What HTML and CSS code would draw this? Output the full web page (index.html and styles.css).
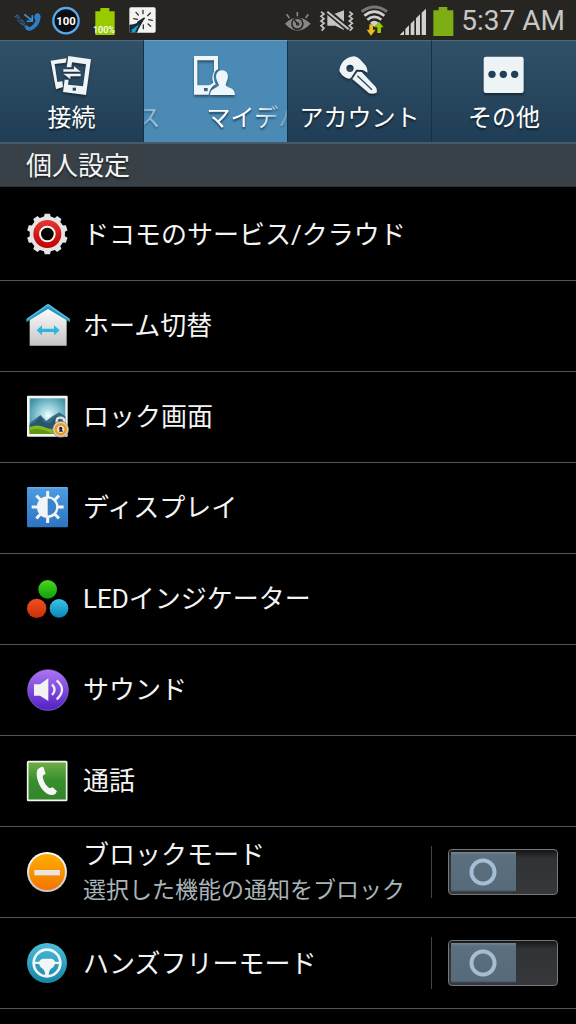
FILE: index.html
```html
<!DOCTYPE html>
<html lang="ja">
<head>
<meta charset="utf-8">
<meta name="viewport" content="width=device-width, initial-scale=1">
<title>個人設定</title>
<link rel="stylesheet" href="styles.css">
</head>
<body>
<header class="status">
  <svg width="28" height="40" viewBox="39 0 84 120" aria-hidden="true">
    <path d="M75 80Q79 75 84 78L89 82Q101 76 107 61L103 55Q102 47 106 42L114 39Q122 42 122 50C121 71 105 90 88 92Q76 92 75 80Z" fill="#2c7fc4"/>
    <path d="M73 43L94 60M97 46V63L80 64" fill="none" stroke="#3a94dc" stroke-width="5"/>
    <text x="42" y="50" class="push" transform="rotate(48 42 50)">PUSH</text>
  </svg>
  <svg width="28" height="40" viewBox="156 0 84 120" aria-hidden="true">
    <circle cx="198" cy="62" r="38" fill="#0c0d10" stroke="#58aaf0" stroke-width="7"/>
    <text x="198" y="75" class="level">100</text>
  </svg>
  <svg width="28" height="40" viewBox="273 0 84 120" aria-hidden="true">
    <path d="M301 24H328V34H344V105H286V34H301Z" fill="#98cc00"/>
    <text x="312" y="99" class="percent">100%</text>
  </svg>
  <svg width="28" height="40" viewBox="390 0 84 120" aria-hidden="true">
    <rect x="388" y="22" width="79" height="76" rx="5" fill="#f3f3f1"/>
    <path d="M388 74C405 73 416 68 434 54C426 72 417 82 411 98H393Q388 98 388 94Z" fill="#182936"/>
    <path d="M394 90L417 73L405 97H396Z" fill="#16a3ce"/>
    <path d="M429 31V41M408 37L415 45M401 56L412 58M451 39L443 47M457 61L446 59M452 79L444 72M430 86V75" stroke="#333" stroke-width="4" stroke-linecap="round"/>
    <path d="M412 68L434 54" stroke="#222" stroke-width="5"/>
  </svg>
  <div class="status-right">
    <svg width="28" height="40" viewBox="42 0 84 120" aria-hidden="true">
      <path d="M45 71Q82 34 122 71Q82 112 45 71Z" fill="#888785"/>
      <path d="M50 43L58 54M82 36V49M115 43L107 54" stroke="#888785" stroke-width="5"/>
      <circle cx="82" cy="71" r="19" fill="#292724"/><circle cx="82" cy="71" r="14" fill="#888785"/>
      <path d="M82 71L74 61" stroke="#292724" stroke-width="5"/><circle cx="83" cy="72" r="5" fill="#292724"/>
    </svg>
    <svg width="36" height="40" viewBox="144 0 108 120" aria-hidden="true">
      <path d="M172 43H190L222 31V90L196 77H172Z" fill="#c5c4c2"/>
      <path d="M166 29L240 91" stroke="#292724" stroke-width="17"/>
      <path d="M172 35L236 88" stroke="#c5c4c2" stroke-width="6"/>
      <path d="M153 35L162 42L153 49L162 56L153 63L162 70L153 77L162 84L155 92M238 35L247 42L238 49L247 56L238 63L247 70L238 77L247 84L239 92" fill="none" stroke="#c5c4c2" stroke-width="5"/>
    </svg>
    <svg width="28" height="40" viewBox="270 0 84 120" aria-hidden="true">
      <path d="M275 35Q313 7 351 35" fill="none" stroke="#777674" stroke-width="9"/>
      <path d="M283 47Q313 23 343 47M292 59Q313 42 334 59" fill="none" stroke="#d2d1cf" stroke-width="8"/>
      <path d="M300 68Q313 57 326 68L313 81Z" fill="#d2d1cf"/>
      <path d="M298 73H309V89H317L303 107L290 89H298Z" fill="#edbc17"/>
      <path d="M322 99V82H314L327 65L341 82H333V99Z" fill="#99c900"/>
    </svg>
    <svg width="33" height="40" viewBox="372 0 99 120" aria-hidden="true">
      <path d="M389 105L402 92V105ZM406 105V87L417 76V105ZM422 105V71L433 60V105ZM438 105V55L450 43V105ZM455 105V38L468 26V105Z" fill="#d2d1cf"/>
    </svg>
    <svg width="22" height="40" viewBox="489 0 66 120" aria-hidden="true">
      <path d="M506 21H532V31H550V108H490V31H506Z" fill="#7daf15"/>
    </svg>
    <time class="clock">5:37 AM</time>
  </div>
</header>

<nav class="tabs" aria-label="設定">
  <button class="tab" type="button">
    <svg class="tab-icon" viewBox="150 45 132 132" aria-hidden="true">
      <path d="M152 68L200 61L197 74L164 78L172 132L187 130L189 147L168 154Z" fill="#eff4f6"/>
      <path fill-rule="evenodd" d="M205 54L273 64L258 171L189 162L194 125H206L204 140L249 145L258 79L216 73L214 88H200Z" fill="#eff4f6"/>
      <path d="M190 94H222V85L242 101H190ZM242 107H190L211 124V115H242Z" fill="#eff4f6"/>
      <rect x="218" y="149" width="10" height="9" fill="#234760"/>
    </svg>
    <span class="tab-label">接続</span>
  </button>
  <button class="tab tab-active" type="button" aria-current="page">
    <svg class="tab-icon" viewBox="582 45 132 132" aria-hidden="true">
      <path fill-rule="evenodd" d="M582 54H654V94Q643 99 641 115Q642 130 647 139Q630 147 626 170H582ZM592 67V142H628Q636 138 640 134Q633 117 642 101V67ZM612 150V160H623V150Z" fill="#eff6fa"/>
      <path d="M666 97C680 97 686 109 683 122C681 130 678 134 677 142Q681 148 693 151Q704 156 705 171H630Q631 156 642 152Q653 148 657 142C655 134 650 130 649 122C646 108 653 97 666 97Z" fill="#eff6fa"/>
    </svg>
    <span class="tab-label marquee"><span>ス</span><span>マイデバ</span></span>
  </button>
  <button class="tab" type="button">
    <svg class="tab-icon" viewBox="156 45 132 132" aria-hidden="true">
      <path fill-rule="evenodd" d="M205 55Q214 56 222 64L240 84Q244 91 245 104L230 96L211 95L194 121Q186 124 177 118Q166 112 160 99Q161 83 172 70Q185 57 205 55ZM192 80A11 11 0 1 0 192 102A11 11 0 1 0 192 80Z" fill="#eff4f6"/>
      <path d="M214 101L227 102L269 147Q274 153 272 164Q261 169 249 166L199 123Z" fill="#eff4f6"/>
      <path d="M214 113L258 155" stroke="#284b65" stroke-width="4"/>
    </svg>
    <span class="tab-label">アカウント</span>
  </button>
  <button class="tab" type="button">
    <svg class="tab-icon" viewBox="588 45 132 132" aria-hidden="true">
      <rect x="593" y="56" width="120" height="109" rx="7" fill="#eef4f6"/>
      <g fill="#213f57"><circle cx="618" cy="109" r="11"/><circle cx="652" cy="109" r="11"/><circle cx="686" cy="109" r="11"/></g>
    </svg>
    <span class="tab-label">その他</span>
  </button>
</nav>

<main>
  <h1 class="section">個人設定</h1>
  <ul class="list">
    <li class="item"><a class="row" href="#docomo">
      <svg class="icon" viewBox="75 37 132 132" aria-hidden="true">
        <defs>
          <linearGradient id="silver" x2="0" y2="1"><stop stop-color="#fff"/><stop offset="1" stop-color="#c4c4c4"/></linearGradient>
          <linearGradient id="red" x2="0" y2="1"><stop stop-color="#e93532"/><stop offset="1" stop-color="#bd0004"/></linearGradient>
        </defs>
        <g fill="#e4e4e4">
          <circle cx="142" cy="100" r="53"/>
          <path id="teeth" d="M134 39H150L153 52H131ZM134 161H150L153 148H131Z"/>
          <use href="#teeth" transform="rotate(36 142 100)"/><use href="#teeth" transform="rotate(72 142 100)"/><use href="#teeth" transform="rotate(108 142 100)"/><use href="#teeth" transform="rotate(144 142 100)"/>
        </g>
        <circle cx="142" cy="100" r="42" fill="url(#red)"/>
        <circle cx="142" cy="100" r="22" fill="#000" stroke="#f3f3f3" stroke-width="6"/>
      </svg>
      <span class="title">ドコモのサービス/クラウド</span>
    </a></li>
    <li class="item"><a class="row" href="#home">
      <svg class="icon" viewBox="75 309 132 132" aria-hidden="true">
        <path d="M89 355L144 318L200 355V434H89Z" fill="url(#silver)"/>
        <path d="M79 354L144 308L210 354V364L144 324L79 364Z" fill="#2a96c0"/>
        <path d="M79 354L144 308L210 354L205 356L144 315L84 356Z" fill="#50b7da"/>
        <path d="M110 388L126 373V383H162V373L179 388L162 403V393H126V403Z" fill="#2eb5dc"/>
      </svg>
      <span class="title">ホーム切替</span>
    </a></li>
    <li class="item"><a class="row" href="#lock">
      <svg class="icon" viewBox="75 44 132 132" aria-hidden="true">
        <defs>
          <radialGradient id="sky" cx=".52" cy=".48" r=".6"><stop stop-color="#fff"/><stop offset=".25" stop-color="#b7e3e9"/><stop offset="1" stop-color="#3f94a9"/></radialGradient>
          <linearGradient id="orange" x2="0" y2="1"><stop stop-color="#ffae00"/><stop offset="1" stop-color="#f37500"/></linearGradient>
        </defs>
        <rect x="81" y="46" width="122" height="123" rx="3" fill="#f5f5f3"/>
        <rect x="89" y="54" width="107" height="107" fill="url(#sky)"/>
        <path d="M89 128L103 118L121 104L139 122L155 109L178 96L196 108V150H89Z" fill="#386b86"/>
        <path d="M89 134L106 125L121 108L132 126L151 128L170 105L180 119L196 127V150H89Z" fill="#285571"/>
        <path d="M89 140Q112 130 134 141T196 138V161H89Z" fill="#83b91c"/>
        <path d="M89 150Q117 140 147 155L160 161H89Z" fill="#5f9714"/>
        <path d="M170 132V121Q170 112 181 112T193 121V132" fill="none" stroke="#e0e2e3" stroke-width="7"/>
        <circle cx="182" cy="147" r="24" fill="#ddd9cf" stroke="#716b60" stroke-width="2"/>
        <circle cx="182" cy="147" r="15" fill="#e9e5da" stroke="#ed9c26" stroke-width="8"/>
        <circle cx="182" cy="144" r="5" fill="#292929"/><path d="M180 145H185L189 154H177Z" fill="#292929"/>
      </svg>
      <span class="title">ロック画面</span>
    </a></li>
    <li class="item"><a class="row" href="#display">
      <svg class="icon" viewBox="75 318 132 132" aria-hidden="true">
        <defs><linearGradient id="blue" x2="0" y2="1"><stop stop-color="#4d9ce0"/><stop offset="1" stop-color="#2d74c2"/></linearGradient></defs>
        <rect x="81" y="321" width="123" height="121" rx="4" fill="url(#blue)"/>
        <rect x="83" y="322" width="119" height="3" fill="#70b3ea"/>
        <path d="M143 333V351M143 411V429M95 381H113M173 381H191M109 347L122 360M164 402L177 415M177 347L164 360M122 402L109 415" stroke="#f2f4f5" stroke-width="9"/>
        <circle cx="143" cy="381" r="29" fill="#3a82cc" stroke="#f2f4f5" stroke-width="7"/>
        <path d="M143 351A30 30 0 0 0 143 411Z" fill="#f2f4f5"/>
      </svg>
      <span class="title">ディスプレイ</span>
    </a></li>
    <li class="item"><a class="row" href="#led">
      <svg class="icon" viewBox="75 51 132 132" aria-hidden="true">
        <defs>
          <linearGradient id="led-g" x2="0" y2="1"><stop stop-color="#4ad620"/><stop offset="1" stop-color="#109f08"/></linearGradient>
          <linearGradient id="led-r" x2="0" y2="1"><stop stop-color="#f05023"/><stop offset="1" stop-color="#c92e05"/></linearGradient>
          <linearGradient id="led-b" x2="0" y2="1"><stop stop-color="#3bc4e8"/><stop offset="1" stop-color="#0788b7"/></linearGradient>
        </defs>
        <circle cx="143" cy="88" r="28" fill="url(#led-g)"/><circle cx="110" cy="145" r="29" fill="url(#led-r)"/><circle cx="177" cy="145" r="28" fill="url(#led-b)"/>
      </svg>
      <span class="title">LEDインジケーター</span>
    </a></li>
    <li class="item"><a class="row" href="#sound">
      <svg class="icon" viewBox="75 324 132 132" aria-hidden="true">
        <defs><linearGradient id="purple" x2="0" y2="1"><stop stop-color="#aa76f2"/><stop offset="1" stop-color="#521fc5"/></linearGradient></defs>
        <circle cx="144" cy="390" r="61" fill="url(#purple)" stroke="#9c75e8" stroke-width="2"/>
        <path d="M102 373H120L145 355V423L120 407H102Z" fill="#f2f2f2"/>
        <path d="M156 373Q171 389 156 405M170 361Q202 389 170 418" fill="none" stroke="#eeeef5" stroke-width="7"/>
      </svg>
      <span class="title">サウンド</span>
    </a></li>
    <li class="item"><a class="row" href="#call">
      <svg class="icon" viewBox="75 57 132 132" aria-hidden="true">
        <defs><linearGradient id="green" x2="0" y2="1"><stop stop-color="#71ad45"/><stop offset=".5" stop-color="#368f2c"/><stop offset="1" stop-color="#33842b"/></linearGradient></defs>
        <rect x="83" y="65" width="117" height="116" rx="2" fill="url(#green)" stroke="#f1f3ee" stroke-width="5"/>
        <path d="M122 82L130 80L137 101L128 107C129 123 138 137 149 145L158 142L171 154L166 162C156 170 139 163 128 149C112 131 106 100 113 88Z" fill="#f6f6f6"/>
      </svg>
      <span class="title">通話</span>
    </a></li>
    <li class="item"><div class="row">
      <svg class="icon" viewBox="75 327 132 132" aria-hidden="true">
        <circle cx="141" cy="393" r="60" fill="url(#silver)"/><circle cx="141" cy="393" r="54" fill="url(#orange)"/>
        <rect x="103" y="387" width="77" height="16" fill="#eae6e0"/>
      </svg>
      <label class="text" for="block"><span class="title">ブロックモード</span><span class="summary">選択した機能の通知をブロック</span></label>
      <span class="control"><input class="switch" id="block" type="checkbox" role="switch"></span>
    </div></li>
    <li class="item"><div class="row">
      <svg class="icon" viewBox="75 124 132 132" aria-hidden="true">
        <defs><linearGradient id="cyan" x2="0" y2="1"><stop stop-color="#4cbdda"/><stop offset="1" stop-color="#1686a8"/></linearGradient></defs>
        <circle cx="141" cy="190" r="60" fill="url(#cyan)"/>
        <circle cx="141" cy="190" r="40" fill="none" stroke="#f2f6f7" stroke-width="8"/>
        <path d="M101 186H117Q120 178 128 177H155Q163 178 165 186H181V193H165Q162 203 153 207Q147 211 146 228H136Q135 211 128 207Q120 203 117 193H101Z" fill="#f2f6f7"/>
      </svg>
      <label class="text" for="handsfree"><span class="title">ハンズフリーモード</span></label>
      <span class="control"><input class="switch" id="handsfree" type="checkbox" role="switch"></span>
    </div></li>
  </ul>
</main>
</body>
</html>
```
FILE: styles.css
```css
* {
  box-sizing: border-box;
}

body {
  margin: 0;
  background: #000;
  color: #f4f4f4;
  font-family: Roboto, "Noto Sans CJK JP", sans-serif;
}

svg {
  flex: none;
  overflow: visible;
}

.status {
  display: flex;
  align-items: center;
  gap: 11px;
  height: 40px;
  padding: 0 11px 0 13px;
  background: #272522;
}

.status-right {
  display: flex;
  align-items: center;
  gap: 6px;
  margin-left: auto;
}

.clock {
  padding-top: 2px;
  color: #c8c7c5;
  font-size: 28px;
  line-height: 38px;
  white-space: nowrap;
}

.push {
  fill: #3285c8;
  font-size: 18px;
}

.level {
  fill: #fff;
  font-size: 34px;
  font-weight: 700;
  text-anchor: middle;
}

.percent {
  fill: #fff;
  font-size: 27px;
  font-weight: 500;
  text-anchor: middle;
}

.tabs {
  display: grid;
  grid-template-columns: repeat(4, minmax(0, 1fr));
  background: linear-gradient(#315169, #1f3e56);
}

.tab {
  display: flex;
  flex-direction: column;
  align-items: center;
  gap: 5px;
  min-width: 0;
  padding: 12px 0 8px;
  border: 0;
  border-top: 1px solid #4c687b;
  border-right: 1px solid #143149;
  background: none;
  color: #fff;
  font: inherit;
  text-shadow: 0 2px 2px #0008;
}

.tab:last-child {
  border-right: 0;
}

.tab-active {
  border-top-color: #65a3c9;
  background: #4a8ab5;
}

.tab-icon {
  width: 44px;
  height: 44px;
  filter: drop-shadow(0 2px 1px #0006);
}

.tab-label {
  font-size: 24px;
  line-height: 32px;
  white-space: nowrap;
}

.marquee {
  display: flex;
  justify-content: center;
  gap: 46px;
  width: 100%;
  padding-left: 8px;
  overflow: hidden;
  mask-image: linear-gradient(90deg, #0004, #0008 12%, #000 25%, #000 80%, #0002);
}

.section {
  margin: 0;
  padding: 2px 26px 0;
  border-top: 2px solid #455b69;
  border-bottom: 1px solid #2b3338;
  background: #384147;
  font-size: 26px;
  font-weight: 400;
  line-height: 40px;
  text-shadow: 0 2px 2px #0008;
}

.list {
  margin: 0;
  padding: 3px 0 0;
  list-style: none;
}

.item {
  border-bottom: 1px solid #555;
}

.row {
  display: flex;
  align-items: center;
  gap: 14px;
  min-height: 90px;
  padding: 0 18px 0 25px;
  color: inherit;
  text-decoration: none;
}

.icon {
  width: 44px;
  height: 44px;
}

.text {
  display: flex;
  flex: 1;
  flex-direction: column;
  min-width: 0;
  padding-top: 2px;
}

.title {
  font-size: 26px;
  line-height: 36px;
}

.summary {
  color: #a9b4b9;
  font-size: 23px;
  line-height: 36px;
}

.control {
  display: flex;
  align-items: center;
  height: 52px;
  padding-left: 16px;
  border-left: 1px solid #444;
}

.switch {
  appearance: none;
  width: 110px;
  height: 46px;
  margin: 0;
  border: 1px solid #777;
  border-radius: 4px;
  background:
    radial-gradient(circle at 34px 22px, transparent 9px, #a5bed3 10px, #a5bed3 13px, transparent 14px) no-repeat,
    linear-gradient(#768592, #5b6f7f 3px, #576a79 38px, #2e3b49) 2px 2px / 65px 40px no-repeat,
    linear-gradient(#151617, #303235 8px, #37383b);
}

.switch:checked {
  border-color: #8fc4dd;
}
```
